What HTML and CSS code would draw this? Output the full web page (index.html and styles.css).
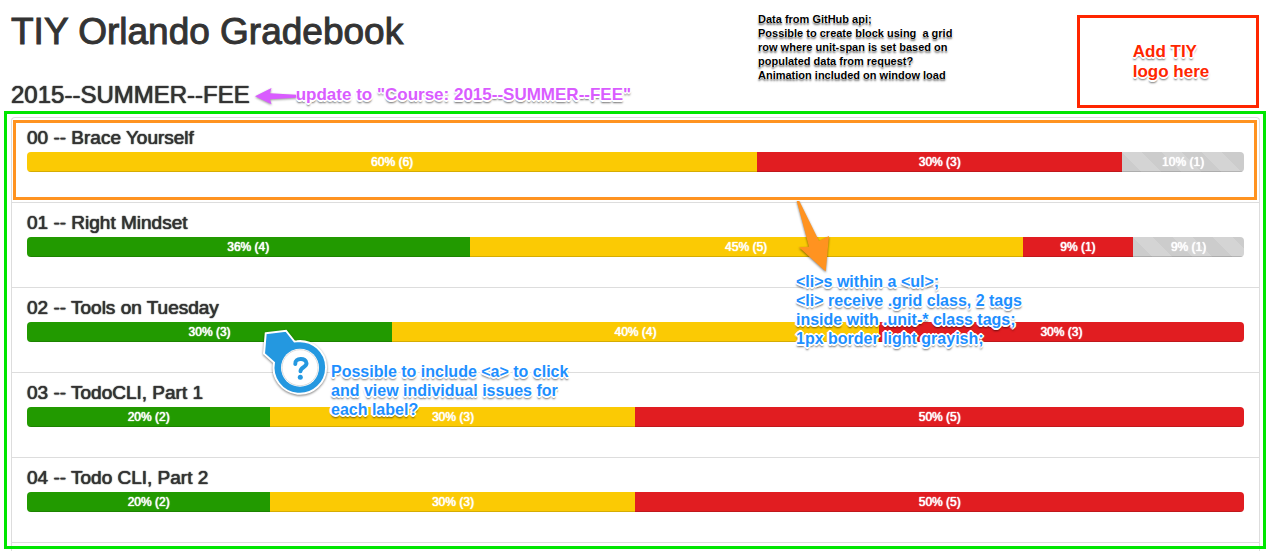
FILE: index.html
```html
<!DOCTYPE html>
<html lang="en">
<head>
<meta charset="utf-8">
<title>TIY Orlando Gradebook</title>
<link rel="stylesheet" href="styles.css">
</head>
<body>
<header class="page-header">
  <div class="headings">
    <h1 class="title">TIY Orlando Gradebook</h1>
    <div class="course-row">
      <h2 class="course">2015--SUMMER--FEE</h2>
      <svg class="arrow-left" width="42" height="20" viewBox="0 0 42 20" aria-hidden="true"><path d="M1 11.300L17.500 3L16 8.300L42 9.700V12.700L16 14.300L17.500 19.300Z" fill="#d95cff"/></svg>
      <p class="note note-purple">update to "Course: 2015--SUMMER--FEE"</p>
    </div>
  </div>
  <p class="note note-black">Data from GitHub api;<br>Possible to create block using&nbsp; a grid<br>row where unit-span is set based on<br>populated data from request?<br>Animation included on window load</p>
  <div class="logo-box"><p class="note note-red">Add TIY<br>logo here</p></div>
</header>
<main class="board">
  <ul class="units">
    <li class="unit marked">
      <h3 class="unit-title">00 -- Brace Yourself</h3>
      <div class="progress">
        <div class="bar yellow" style="width:60%">60% (6)</div>
        <div class="bar red" style="width:30%">30% (3)</div>
        <div class="bar striped" style="width:10%">10% (1)</div>
      </div>
    </li>
    <li class="unit">
      <h3 class="unit-title">01 -- Right Mindset</h3>
      <div class="progress">
        <div class="bar green" style="width:36.36%">36% (4)</div>
        <div class="bar yellow" style="width:45.45%">45% (5)</div>
        <div class="bar red" style="width:9.09%">9% (1)</div>
        <div class="bar striped" style="width:9.10%">9% (1)</div>
      </div>
    </li>
    <li class="unit">
      <h3 class="unit-title">02 -- Tools on Tuesday</h3>
      <div class="progress">
        <div class="bar green" style="width:30%">30% (3)</div>
        <div class="bar yellow" style="width:40%">40% (4)</div>
        <div class="bar red" style="width:30%">30% (3)</div>
      </div>
    </li>
    <li class="unit">
      <h3 class="unit-title">03 -- TodoCLI, Part 1</h3>
      <div class="progress">
        <div class="bar green" style="width:20%">20% (2)</div>
        <div class="bar yellow" style="width:30%">30% (3)</div>
        <div class="bar red" style="width:50%">50% (5)</div>
      </div>
    </li>
    <li class="unit">
      <h3 class="unit-title">04 -- Todo CLI, Part 2</h3>
      <div class="progress">
        <div class="bar green" style="width:20%">20% (2)</div>
        <div class="bar yellow" style="width:30%">30% (3)</div>
        <div class="bar red" style="width:50%">50% (5)</div>
      </div>
    </li>
    <li class="unit-next"></li>
  </ul>
  <div class="callout callout-list">
    <svg class="arrow-down" width="50" height="76" viewBox="0 0 50 76" aria-hidden="true"><path d="M12.700 1L15.300 1L35 41L45 36L41.700 71.500L15 47.300L25 46.700Z" fill="#ff9320"/></svg>
    <p class="note note-blue">&lt;li&gt;s within a &lt;ul&gt;;<br>&lt;li&gt; receive .grid class, 2 tags<br>inside with .unit-* class tags;<br>1px border light grayish;</p>
  </div>
  <div class="callout callout-link">
    <svg class="marker" width="70" height="74" viewBox="0 0 70 74" aria-hidden="true">
      <path d="M5.700 5.300L26 2.700L34.500 13.500L37 13.300A26.300 26.300 0 1 1 14 34.500L4 25.700Z" fill="#2498e0" stroke="#fff" stroke-width="2"/>
      <circle cx="40" cy="39.700" r="19" fill="#fff"/>
      <circle cx="40" cy="39.700" r="18" fill="#fff" stroke="#ddd"/>
      <path d="M35.300 36C34.500 29.500 46.500 29.300 46.500 35.300C46.500 39.500 40.500 39 40.500 43.300" fill="none" stroke="#2498e0" stroke-width="4" stroke-linecap="round"/>
      <circle cx="40.300" cy="49.300" r="2.500" fill="#2498e0"/>
    </svg>
    <p class="note note-blue">Possible to include &lt;a&gt; to click<br>and view individual issues for<br>each label?</p>
  </div>
</main>
</body>
</html>
```

FILE: styles.css
```css
* { box-sizing: border-box; }
body {
  margin: 0;
  padding: 0 11px;
  background: #fff;
  color: #333;
  font: 12px/20px "Liberation Sans", Arial, sans-serif;
}
h1, h2, h3, p, ul { margin: 0; padding: 0; font-weight: 400; }
h2, h3 { text-shadow: 0 0 1px #333, 0 0 1px #333; }

.page-header { display: flex; align-items: flex-start; height: 117px; }
.headings { flex: 1; padding-top: 12px; }
.title { font-size: 37px; line-height: 40px; -webkit-text-stroke: 1px #333; }
.course-row { display: flex; align-items: center; margin-top: 30px; white-space: nowrap; }
.course { margin-right: 4px; font-size: 24px; line-height: 26px; }
.arrow-left { filter: drop-shadow(0 1px 1px rgba(0, 0, 0, .4)); }

.note {
  font-weight: 700;
  white-space: nowrap;
  text-shadow: -1px -1px 0 #fff, 1px -1px 0 #fff, -1px 1px 0 #fff, 1px 1px 0 #fff,
    0 2px 0 #fff, 2px 0 0 #fff, -2px 0 0 #fff, 0 -2px 0 #fff,
    0 3px 2px rgba(0, 0, 0, .6);
}
.note-purple { color: #d95cff; font-size: 17px; line-height: 20px; }
.note-black {
  width: 205px;
  margin: 12px 114px 0 0;
  color: #000;
  font-size: 11px;
  line-height: 14px;
  text-shadow: 1px 0 0 #fff, -1px 0 0 #fff, 0 2px 2px rgba(0, 0, 0, .6);
}
.logo-box {
  display: flex;
  align-items: center;
  justify-content: center;
  width: 182px;
  height: 93px;
  margin: 15px 1px 0 0;
  padding-left: 6px;
  border: 3px solid #ff2600;
}
.note-red { color: #ff2600; font-size: 17px; line-height: 20px; }

.board { position: relative; }
.board::after {
  content: "";
  position: absolute;
  inset: -6px -6px 2px -7px;
  border: 3px solid #00e600;
  pointer-events: none;
}
.units {
  list-style: none;
  border: 1px solid #ddd;
  border-bottom: 0;
  border-radius: 4px 4px 0 0;
}
.unit { position: relative; padding: 10px 15px; border-bottom: 1px solid #ddd; }
.unit-next { height: 8px; }
.marked::after {
  content: "";
  position: absolute;
  inset: 2px 2px 2px 1px;
  border: 3px solid #ff9320;
}
.unit-title { font-size: 19px; line-height: 20px; }
.progress {
  display: flex;
  height: 20px;
  margin: 4px 0 20px;
  overflow: hidden;
  border-radius: 4px;
}
.bar {
  color: #fff;
  text-align: center;
  text-shadow: 0 0 1px #fff, 0 0 1px #fff;
  box-shadow: inset 0 -1px 0 rgba(0, 0, 0, .15);
}
.green { background-color: #229a00; }
.yellow { background-color: #fbca04; }
.red { background-color: #e11d21; }
.striped {
  background-color: #ccc;
  background-image: linear-gradient(45deg, rgba(255, 255, 255, .15) 25%, transparent 25%, transparent 50%, rgba(255, 255, 255, .15) 50%, rgba(255, 255, 255, .15) 75%, transparent 75%);
  background-size: 40px 40px;
}

.callout { position: absolute; z-index: 1; }
.callout svg { display: block; filter: drop-shadow(0 1px 1px rgba(0, 0, 0, .5)); }
.callout-list { left: 773px; top: 83px; }
.callout-list .note { margin: -4px 0 0 12px; }
.callout-link { display: flex; left: 249px; top: 211px; }
.callout-link .note { padding: 34px 0 0 1px; }
.note-blue { color: #1e8fff; font-size: 16px; line-height: 19px; }
```
